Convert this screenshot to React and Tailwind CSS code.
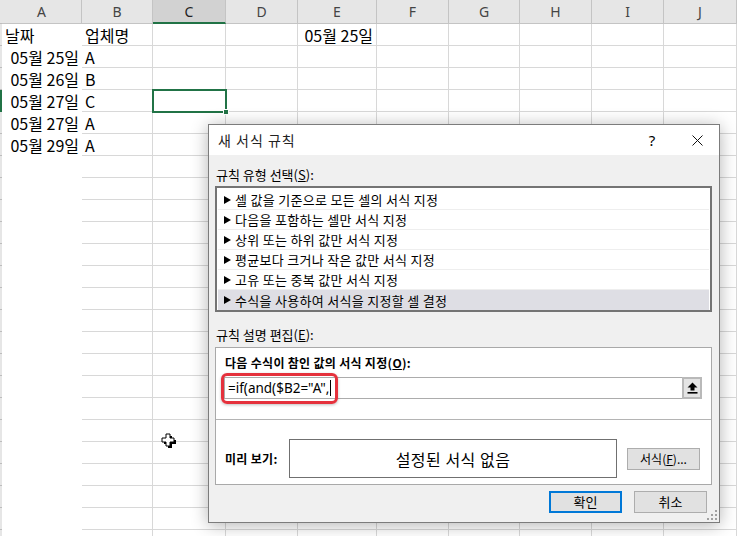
import React from "react";

const cols = [
  { key: "A", w: "w-[80px]" },
  { key: "B", w: "w-[71px]" },
  { key: "C", w: "w-[73px]" },
  { key: "D", w: "w-[72px]" },
  { key: "E", w: "w-[79px]" },
  { key: "F", w: "w-[72px]" },
  { key: "G", w: "w-[71px]" },
  { key: "H", w: "w-[72px]" },
  { key: "I", w: "w-[72px]" },
  { key: "J", w: "w-[73px]" },
];

// cell values by row index (1-based rows)
const data = {
  1: { A: { t: "날짜" }, B: { t: "업체명" }, E: { t: "05월 25일" } },
  2: { A: { t: "05월 25일" }, B: { t: "A" } },
  3: { A: { t: "05월 26일" }, B: { t: "B" } },
  4: { A: { t: "05월 27일" }, B: { t: "C" } },
  5: { A: { t: "05월 27일" }, B: { t: "A" } },
  6: { A: { t: "05월 29일" }, B: { t: "A" } },
};

const rules = [
  "셀 값을 기준으로 모든 셀의 서식 지정",
  "다음을 포함하는 셀만 서식 지정",
  "상위 또는 하위 값만 서식 지정",
  "평균보다 크거나 작은 값만 서식 지정",
  "고유 또는 중복 값만 서식 지정",
  "수식을 사용하여 서식을 지정할 셀 결정",
];

const Tri = () => (
  <svg width="7" height="8" viewBox="0 0 7 8" className="shrink-0">
    <polygon points="0,0 7,4 0,8" fill="#000" />
  </svg>
);

const Sheet = () => {
  const rows = Array.from({ length: 24 }, (_, i) => i + 1);
  return (
    <div className="font-['Noto_Sans_CJK_KR',sans-serif] text-[16px] text-black">
      {/* column headers */}
      <div className="flex h-[24px] bg-[#e6e6e6] font-['Noto_Sans',sans-serif] text-[14px] text-[#444]">
        <div className="w-[2px] border-b border-[#bdbdbd] bg-[#e6e6e6]" />
        {cols.map((c) =>
          c.key === "C" ? (
            <div
              key={c.key}
              className={`${c.w} flex items-center justify-center bg-[#d2d2d2] border-r border-[#c4c4c4] border-b-2 border-b-[#217346] text-[#222]`}
            >
              {c.key}
            </div>
          ) : (
            <div
              key={c.key}
              className={`${c.w} flex items-center justify-center border-r border-b border-[#c4c4c4]`}
            >
              {c.key}
            </div>
          )
        )}
      </div>
      {rows.map((r) => (
        <div key={r} className="flex h-[22px]">
          <div
            className={
              r === 4
                ? "w-[2px] bg-[#217346]"
                : "w-[2px] bg-[#e6e6e6] border-b border-[#bdbdbd]"
            }
          />
          {cols.map((c) => {
            const v = data[r] && data[r][c.key];
            const isA = c.key === "A";
            const isDate = v && v.t.includes("월");
            return (
              <div
                key={c.key}
                className={`${c.w} flex items-center whitespace-nowrap ${
                  isA ? "bg-white" : "border-r border-b border-[#d8d8d8]"
                } ${isDate ? "justify-end pr-[3px]" : "pl-[3px]"}`}
              >
                {v ? v.t : ""}
              </div>
            );
          })}
        </div>
      ))}
    </div>
  );
};

const Dialog = () => (
  <div className="absolute left-[208px] top-[124px] w-[512px] h-[399px] border border-[#7c7c7c] bg-[#f0f0f0] shadow-[0_2px_16px_rgba(0,0,0,0.3)] font-['Noto_Sans_CJK_KR',sans-serif] text-[13px] text-black">
    {/* title bar */}
    <div className="h-[30px] bg-white flex items-center pl-[9px] pr-[12px]">
      <span className="text-[14px] tracking-[1px] text-[#222]">새 서식 규칙</span>
      <span className="ml-auto w-[20px] text-center text-[15px] font-['Noto_Sans',sans-serif]">?</span>
      <span className="ml-[25px] w-[20px] h-[20px] flex items-center justify-center">
        <svg width="11" height="11" viewBox="0 0 11 11">
          <path d="M0.5 0.5 L10.5 10.5 M10.5 0.5 L0.5 10.5" stroke="#111" strokeWidth="1" />
        </svg>
      </span>
    </div>

    <div className="pl-[6px]">
      <div className="mt-[12px] ml-[1px] h-[16px] leading-[16px]">
        규칙 유형 선택(<span className="underline">S</span>):
      </div>

      {/* rule type list */}
      <div className="mt-[3px] w-[497px] h-[126px] border-2 border-[#747474] bg-white pt-[2px]">
        {rules.map((t, i) => (
          <div
            key={t}
            className={`mx-[1px] h-[20px] flex items-center gap-[4px] pl-[6px] ${
              i === rules.length - 1 ? "bg-[#dedee4]" : "border-b border-[#eeeeee]"
            }`}
          >
            <Tri />
            <span className="leading-none tracking-[0.3px]">{t}</span>
          </div>
        ))}
      </div>

      <div className="mt-[15px] ml-[1px] h-[16px] leading-[16px]">
        규칙 설명 편집(<span className="underline">E</span>):
      </div>

      {/* description group */}
      <div className="mt-[4px] w-[497px] h-[138px] border border-[#a9a9a9] bg-white">
        <div className="mt-[7px] pl-[9px] h-[16px] leading-[16px] font-bold text-[12px] tracking-[0.3px]">
          다음 수식이 참인 값의 서식 지정(<span className="underline">O</span>):
        </div>
        <div className="mt-[6px] ml-[8px] w-[478px] h-[22px] flex">
          <div className="flex-1 flex items-center border border-[#acacac] border-r-0 pl-[3px] text-[13.5px] font-['Noto_Sans',sans-serif]">
            <span>=if(and($B2="A",</span>
            <span className="ml-[1px] w-[1px] h-[16px] bg-black" />
          </div>
          <div className="w-[20px] h-[22px] border-2 border-[#b9b9b9] bg-[#e4e4e4] flex items-center justify-center">
            <svg width="11" height="12" viewBox="0 0 11 12">
              <polygon points="5.5,0.5 10.5,5.5 7.5,5.5 7.5,8.5 3.5,8.5 3.5,5.5 0.5,5.5" fill="#000" />
              <rect x="0.5" y="10" width="10" height="1.6" fill="#000" />
            </svg>
          </div>
        </div>
        <div className="mt-[20px] w-[495px] h-[1px] bg-[#b4b4b4]" />
        <div className="mt-[19px] h-[39px] flex items-center">
          <div className="w-[73px] pl-[9px] font-bold text-[12px] tracking-[0.3px]">미리 보기:</div>
          <div className="w-[328px] h-[39px] border border-[#707070] bg-white flex items-center justify-center text-[16px] tracking-[0.5px]">
            설정된 서식 없음
          </div>
          <div className="ml-[10px] w-[73px] h-[22px] border border-[#adadad] bg-[#e1e1e1] flex items-center justify-center text-[12px]">
            서식(<span className="underline">F</span>)...
          </div>
        </div>
      </div>

      {/* buttons */}
      <div className="mt-[6px] h-[22px] flex gap-[12px] pl-[334px]">
        <div className="w-[73px] h-[22px] border-2 border-[#0078d7] bg-[#e1e1e1] flex items-center justify-center text-[13px]">
          확인
        </div>
        <div className="w-[73px] h-[22px] border border-[#adadad] bg-[#e1e1e1] flex items-center justify-center text-[13px]">
          취소
        </div>
      </div>
    </div>

    {/* red highlight around formula */}
    <div className="absolute left-[12px] top-[248px] w-[117px] h-[31px] border-[3px] border-[#e5313c] rounded-[6px] shadow-[0_1px_3px_rgba(0,0,0,0.25)]" />

    {/* resize grip */}
    <svg className="absolute right-[2px] bottom-[2px]" width="10" height="10" viewBox="0 0 10 10">
      <rect x="8" y="0" width="2" height="2" fill="#a0a0a0" />
      <rect x="4" y="4" width="2" height="2" fill="#a0a0a0" />
      <rect x="8" y="4" width="2" height="2" fill="#a0a0a0" />
      <rect x="0" y="8" width="2" height="2" fill="#a0a0a0" />
      <rect x="4" y="8" width="2" height="2" fill="#a0a0a0" />
      <rect x="8" y="8" width="2" height="2" fill="#a0a0a0" />
    </svg>
  </div>
);

const App = () => {
  return (
    <div className="relative w-[737px] h-[536px] overflow-hidden bg-white">
      <Sheet />

      {/* active cell C4 */}
      <div className="absolute left-[152px] top-[89px] w-[75px] h-[24px] border-2 border-[#217346]" />
      <div className="absolute left-[223px] top-[109px] w-[6px] h-[6px] bg-[#217346] border border-white" />

      <Dialog />

      {/* mouse cursor */}
      <svg className="absolute left-[161px] top-[433px]" width="16" height="16" viewBox="0 0 16 16">
        <path d="M6 2 H10 V6 H14 V10 H10 V14 H6 V10 H2 V6 H6 Z" fill="#000" transform="translate(1,1)" />
        <path d="M5 1 H9 V5 H13 V9 H9 V13 H5 V9 H1 V5 H5 Z" fill="#fff" stroke="#000" strokeWidth="1" />
      </svg>
    </div>
  );
};

export default App;
